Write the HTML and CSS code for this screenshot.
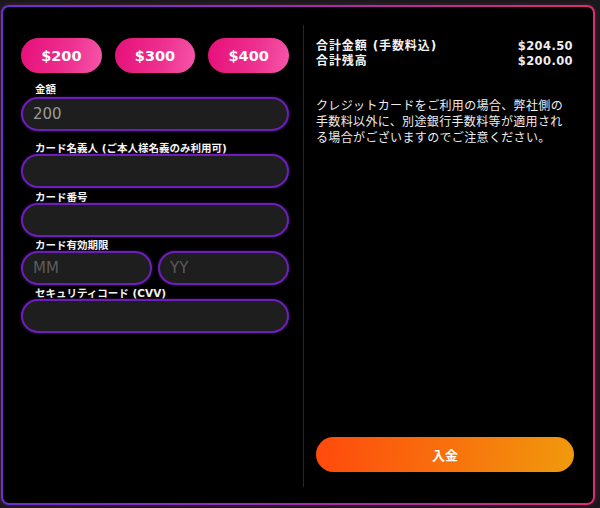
FILE: index.html
```html
<!DOCTYPE html>
<html lang="ja">
<head>
<meta charset="utf-8">
<title>入金</title>
<link rel="stylesheet" href="styles.css">
</head>
<body>
<div class="panel">
  <div class="left">
    <div class="presets">
      <button class="preset">$200</button>
      <button class="preset">$300</button>
      <button class="preset">$400</button>
    </div>
    <div class="field f1">
      <label class="lbl">金額</label>
      <input class="inp value" type="text" value="200">
    </div>
    <div class="field f2">
      <label class="lbl">カード名義人 (ご本人様名義のみ利用可)</label>
      <input class="inp" type="text">
    </div>
    <div class="field f3">
      <label class="lbl">カード番号</label>
      <input class="inp" type="text">
    </div>
    <div class="field f4">
      <label class="lbl">カード有効期限</label>
      <div class="pair">
        <input class="inp" type="text" placeholder="MM">
        <input class="inp" type="text" placeholder="YY">
      </div>
    </div>
    <div class="field f5">
      <label class="lbl">セキュリティコード (CVV)</label>
      <input class="inp" type="text">
    </div>
  </div>
  <div class="divider"></div>
  <div class="right">
    <div class="summary">
      <div class="row"><span class="k">合計金額 (手数料込)</span><span class="v">$204.50</span></div>
      <div class="row"><span class="k">合計残高</span><span class="v">$200.00</span></div>
    </div>
    <p class="note">クレジットカードをご利用の場合、弊社側の手数料以外に、別途銀行手数料等が適用される場合がございますのでご注意ください。</p>
    <button class="deposit">入金</button>
  </div>
</div>
</body>
</html>
```

FILE: styles.css
```css
* { box-sizing: border-box; }
html, body { margin: 0; padding: 0; }
body {
  background: #1b191d;
  width: 600px;
  height: 508px;
  overflow: hidden;
  font-family: "DejaVu Sans", "Noto Sans CJK JP", sans-serif;
  color: #f2f2f2;
}
.panel {
  margin: 5px 0 0 1px;
  width: 594px;
  height: 500px;
  border: 2px solid transparent;
  border-radius: 8px;
  background:
    linear-gradient(#000, #000) padding-box,
    linear-gradient(90deg, #6a2ed8 0%, #9a2cb8 45%, #d8306e 100%) border-box;
  display: flex;
  box-shadow: 0 0 4px rgba(200, 40, 120, 0.35);
}
.left {
  width: 268px;
  margin-left: 18px;
  padding-top: 31px;
  display: flex;
  flex-direction: column;
}
.presets {
  display: flex;
  gap: 13px;
  height: 35px;
}
.preset {
  flex: 1;
  border: 0;
  border-radius: 18px;
  background: linear-gradient(100deg, #e6107a 0%, #ee3190 60%, #f656aa 100%);
  color: #fff;
  font-family: "DejaVu Sans", sans-serif;
  font-weight: bold;
  font-size: 14.5px;
  padding: 0;
}
.field { display: flex; flex-direction: column; }
.lbl {
  font-size: 10.5px;
  font-weight: bold;
  line-height: 10px;
  padding-left: 14px;
  margin-bottom: 1px;
  color: #f4f4f4;
  white-space: nowrap;
}
.f1 { margin-top: 11px; }
.f1 .lbl { margin-bottom: 3px; }
.f2 { margin-top: 11.5px; }
.f3 { margin-top: 4px; }
.f4 { margin-top: 3.5px; }
.f5 { margin-top: 3px; }
.inp {
  width: 100%;
  height: 34px;
  border: 2px solid #6c1fb8;
  border-radius: 17px;
  background: #1e1e1e;
  box-shadow: 0 0 3px rgba(130, 40, 220, 0.45);
  padding: 0 10px;
  font-family: "DejaVu Sans", sans-serif;
  font-size: 15px;
  color: #9a9a9a;
  outline: none;
}
.inp::placeholder { color: #5c5c5c; }
.pair { display: flex; gap: 6px; }
.pair .inp { flex: 1; width: auto; min-width: 0; }
.divider {
  width: 1px;
  margin: 18px 0 16px 14px;
  background: #262626;
}
.right {
  width: 258px;
  margin-left: 12px;
  padding: 32px 0 31px;
  display: flex;
  flex-direction: column;
}
.row {
  display: flex;
  justify-content: space-between;
  line-height: 15px;
  padding-right: 1px;
}
.k {
  font-size: 12px;
  font-weight: bold;
  letter-spacing: 0.9px;
}
.v {
  font-size: 11.5px;
  font-weight: bold;
  letter-spacing: 0.4px;
  color: #ececec;
}
.note {
  margin: 27.5px 0 0;
  font-family: "Noto Sans CJK JP", sans-serif;
  font-size: 12px;
  letter-spacing: 0.35px;
  line-height: 16px;
  color: #ededed;
  padding-right: 8px;
}
.deposit {
  margin-top: auto;
  height: 35px;
  width: 100%;
  border: 0;
  border-radius: 18px;
  background: linear-gradient(95deg, #ff4a0c 0%, #f8700c 50%, #f09a0c 100%);
  color: #fff;
  font-family: "Noto Sans CJK JP", sans-serif;
  font-weight: bold;
  font-size: 13px;
  padding: 0;
}
```
